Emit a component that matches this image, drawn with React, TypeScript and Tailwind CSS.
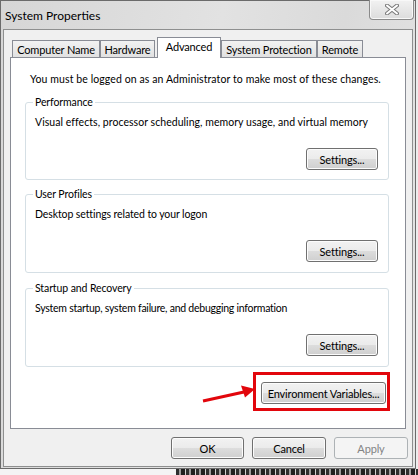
import type { ReactNode } from 'react';

function WinButton({
  children,
  width,
  disabled = false,
}: {
  children: ReactNode;
  width: string;
  disabled?: boolean;
}) {
  if (disabled) {
    return (
      <button
        disabled
        className={`${width} h-[22px] rounded-[3px] border border-[#adb2b5] bg-[#f4f4f4] text-[#838383] text-[11px] tracking-[-0.15px] leading-none whitespace-nowrap flex items-center justify-center`}
      >
        {children}
      </button>
    );
  }
  return (
    <button
      className={`${width} h-[22px] rounded-[3px] border border-[#707070] bg-[linear-gradient(#f2f2f2_0%,#ebebeb_50%,#dddddd_50%,#cfcfcf_100%)] shadow-[inset_0_0_0_1px_#fcfcfc] text-black text-[11px] tracking-[-0.15px] leading-none whitespace-nowrap flex items-center justify-center`}
    >
      {children}
    </button>
  );
}

function GroupBox({
  title,
  text,
  height,
  track = 'tracking-[-0.1px]',
}: {
  title: string;
  text: string;
  height: string;
  track?: string;
}) {
  return (
    <div className={`relative ml-[14px] w-[364px] ${height} rounded-[3px] border border-[#d5dfe5] flex flex-col`}>
      <span className="absolute left-[7px] -top-[8px] bg-white px-[2px] text-[10.5px] leading-[15px] whitespace-nowrap tracking-[-0.1px]">
        {title}
      </span>
      <p className={`pl-[9px] pt-[12px] text-[10.5px] leading-[15px] whitespace-nowrap ${track}`}>{text}</p>
      <div className="mt-[18px] mr-[10px] self-end">
        <WinButton width="w-[72px]">Settings...</WinButton>
      </div>
    </div>
  );
}

const tabs = [
  { label: 'Computer Name', w: 'w-[88px] ml-[2px]' },
  { label: 'Hardware', w: 'w-[55px]' },
  { label: 'Advanced', w: 'w-[64px] ml-[2px]', active: true },
  { label: 'System Protection', w: 'w-[96px]' },
  { label: 'Remote', w: 'w-[46px]' },
];

export default function App() {
  return (
    <div className="relative w-[418px] h-[475px] overflow-hidden bg-[#ececec] text-black text-[11px] tracking-[-0.15px] font-['Lato','Noto_Sans',sans-serif]">
      {/* Window */}
      <div className="w-[416px] h-[469px] border border-[#6b6b6b] bg-[linear-gradient(100deg,#d6d6d6_0%,#e2e2e2_45%,#dadada_70%,#e6e6e6_100%)] flex flex-col">
        {/* Title bar */}
        <div className="h-[28px] flex justify-between">
          <span className="pl-[4px] pt-[7px] text-[12px] tracking-normal leading-[15px]">System Properties</span>
          <div className="-mt-[1px] mr-[1px] w-[45px] h-[20px] rounded-b-[4px] border border-t-0 border-[#8a8a8a] bg-[linear-gradient(#f2f2f2,#dcdcdc)] shadow-[inset_0_0_0_1px_#f8f8f8] flex items-center justify-center">
            <svg width="14" height="11" viewBox="0 0 14 11">
              <path d="M2 1.5 L12 9.5 M12 1.5 L2 9.5" stroke="#7b7b7b" strokeWidth="4" strokeLinecap="round" fill="none" />
              <path d="M2 1.5 L12 9.5 M12 1.5 L2 9.5" stroke="#ffffff" strokeWidth="2" strokeLinecap="round" fill="none" />
            </svg>
          </div>
        </div>

        {/* Client area */}
        <div className="ml-[2px] w-[410px] h-[438px] border border-[#8e8f8f] bg-[#f0f0f0] pl-[6px] pt-[7px] flex flex-col">
          {/* Tabs */}
          <div className="relative z-10 h-[20px] flex items-end">
            {tabs.map((t) =>
              t.active ? (
                <div
                  key={t.label}
                  className={`${t.w} h-[21px] -mb-[1px] border border-b-0 border-[#898c95] bg-white flex items-start justify-center pt-[1px] leading-[15px] whitespace-nowrap`}
                >
                  {t.label}
                </div>
              ) : (
                <div
                  key={t.label}
                  className={`${t.w} h-[17px] border border-b-0 border-[#898c95] bg-[linear-gradient(#f2f2f2,#e1e1e1)] flex items-center justify-center leading-[15px] whitespace-nowrap`}
                >
                  {t.label}
                </div>
              ),
            )}
          </div>

          {/* Tab page */}
          <div className="w-[396px] h-[372px] border border-[#898c95] bg-white flex flex-col">
            <p className="pl-[19px] pt-[14px] text-[10.5px] leading-[15px] whitespace-nowrap tracking-[0.1px]">
              You must be logged on as an Administrator to make most of these changes.
            </p>
            <div className="mt-[15px]">
              <GroupBox
                title="Performance"
                text="Visual effects, processor scheduling, memory usage, and virtual memory"
                height="h-[78px]"
                track="tracking-[0.05px]"
              />
            </div>
            <div className="mt-[14px]">
              <GroupBox title="User Profiles" text="Desktop settings related to your logon" height="h-[79px]" />
            </div>
            <div className="mt-[15px]">
              <GroupBox
                title="Startup and Recovery"
                text="System startup, system failure, and debugging information"
                height="h-[79px]"
                track="tracking-[-0.25px]"
              />
            </div>
            <div className="mt-[5px] mr-[15px] self-end border-[3px] border-[#e2060c] pl-[5px] pr-[1px] pt-[7px] pb-[4px]">
              <WinButton width="w-[125px]">Environment Variables...</WinButton>
            </div>
          </div>

          {/* Dialog buttons */}
          <div className="mt-[8px] pr-[4px] flex justify-end gap-[8px]">
            <WinButton width="w-[73px]">OK</WinButton>
            <WinButton width="w-[74px]">Cancel</WinButton>
            <WinButton width="w-[74px]" disabled>
              Apply
            </WinButton>
          </div>
        </div>
      </div>

      {/* Strip below the window */}
      <div className="flex h-[6px]">
        <div className="w-[176px] bg-[#f4f4f4]" />
        <div className="flex-1 bg-[repeating-linear-gradient(90deg,#2e2e2e_0px,#2e2e2e_3px,#9a9a9a_3px,#9a9a9a_5px,#1f1f1f_5px,#1f1f1f_9px,#cfcfcf_9px,#cfcfcf_10px)]" />
      </div>

      {/* Red annotation arrow */}
      <svg className="absolute left-[198px] top-[382px]" width="62" height="24" viewBox="0 0 62 24">
        <line x1="5" y1="19" x2="46" y2="10" stroke="#e2060c" strokeWidth="3" />
        <polygon points="57,7 43,3.5 47,15.5" fill="#e2060c" />
      </svg>
    </div>
  );
}
